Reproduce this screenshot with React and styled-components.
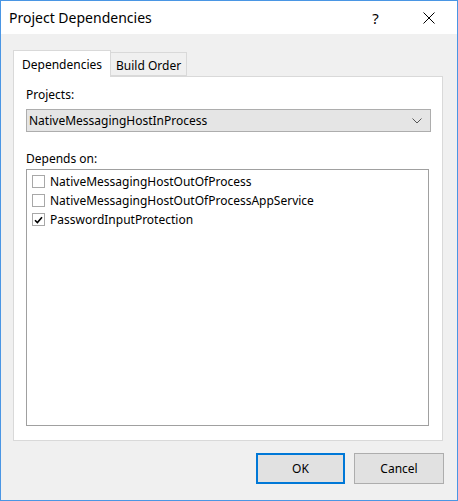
import React, { useState } from 'react'
import styled, { createGlobalStyle } from 'styled-components'

const GlobalStyle = createGlobalStyle`
  html, body {
    margin: 0;
    padding: 0;
    background: #ffffff;
  }
  body {
    font-family: "Noto Sans", "Open Sans", sans-serif;
    font-size: 12px;
    color: #000;
  }
`

const Window = styled.div`
  width: 458px;
  height: 501px;
  box-sizing: border-box;
  border: 1px solid #4a96e4;
  background: #f0f0f0;
  display: flex;
  flex-direction: column;
`

const TitleBar = styled.div`
  height: 33px;
  background: #fff;
  display: flex;
  align-items: center;
  padding: 0 2px 0 8px;
  font-size: 14px;
`

const Title = styled.div`
  flex: 1;
`

const TitleButton = styled.div`
  width: ${p => p.w}px;
  height: 33px;
  display: flex;
  align-items: center;
  justify-content: center;
  font-size: 15px;
  color: #000;
`

const Body = styled.div`
  flex: 1;
  display: flex;
  flex-direction: column;
  padding: 16px 13px 0 12px;
`

const TabRow = styled.div`
  display: flex;
  align-items: flex-end;
  height: 26px;
`

const Tab = styled.div`
  box-sizing: border-box;
  border: 1px solid #d9d9d9;
  border-bottom: ${p => (p.active ? 'none' : '1px solid #d9d9d9')};
  background: ${p => (p.active ? '#fff' : '#f0f0f0')};
  height: ${p => (p.active ? 27 : 24)}px;
  margin-bottom: ${p => (p.active ? -1 : 0)}px;
  margin-left: ${p => (p.active ? 0 : -1)}px;
  padding: 0 ${p => (p.active ? 8 : 5)}px;
  display: flex;
  align-items: center;
  position: relative;
  z-index: ${p => (p.active ? 1 : 0)};
  padding-top: ${p => (p.active ? 0 : 2)}px;
`

const Panel = styled.div`
  box-sizing: border-box;
  height: 365px;
  margin-right: 1px;
  border: 1px solid #d9d9d9;
  background: #fff;
  padding: 9px 11px 0 12px;
  display: flex;
  flex-direction: column;
`

const Label = styled.div`
  line-height: 18px;
`

const Combo = styled.div`
  box-sizing: border-box;
  height: 23px;
  margin-top: 5px;
  border: 1px solid #adadad;
  background: #e5e5e5;
  display: flex;
  align-items: center;
  padding: 0 8px 0 2px;
  margin-bottom: 18px;
`

const ComboText = styled.div`
  flex: 1;
`

const ListBox = styled.div`
  box-sizing: border-box;
  height: 257px;
  margin-top: 1px;
  margin-right: 2px;
  border: 1px solid #a0a0a0;
  background: #fff;
  padding: 2px 0 0 5px;
`

const Row = styled.label`
  display: flex;
  align-items: center;
  height: 19px;
  gap: 5px;
`

const Box = styled.span`
  box-sizing: border-box;
  width: 13px;
  height: 13px;
  border: 1px solid #a8a8a8;
  background: #fff;
  display: flex;
  align-items: center;
  justify-content: center;
`

const ButtonRow = styled.div`
  display: flex;
  justify-content: flex-end;
  gap: 9px;
  margin-top: 12px;
`

const Button = styled.button`
  box-sizing: border-box;
  width: ${p => p.w}px;
  height: 31px;
  font-family: inherit;
  font-size: 12px;
  background: #e1e1e1;
  border: ${p => (p.primary ? '2px solid #0078d7' : '1px solid #adadad')};
  padding: 0;
  color: #000;
`

const items = [
  { name: 'NativeMessagingHostOutOfProcess', checked: false },
  { name: 'NativeMessagingHostOutOfProcessAppService', checked: false },
  { name: 'PasswordInputProtection', checked: true },
]

function CheckRow({ name, checked, onToggle }) {
  return (
    <Row onClick={onToggle}>
      <Box>
        {checked && (
          <svg width="9" height="8" viewBox="0 0 9 8">
            <path d="M1 4.2 L3.4 6.6 L8 1.2" fill="none" stroke="#000" strokeWidth="1.6" />
          </svg>
        )}
      </Box>
      <span>{name}</span>
    </Row>
  )
}

export default function App() {
  const [list, setList] = useState(items)
  const toggle = i =>
    setList(list.map((it, j) => (j === i ? { ...it, checked: !it.checked } : it)))

  return (
    <>
      <GlobalStyle />
      <Window>
        <TitleBar>
          <Title>Project Dependencies</Title>
          <TitleButton w={53}>?</TitleButton>
          <TitleButton w={53}>
            <svg width="12" height="12" viewBox="0 0 12 12">
              <path d="M0.5 0.5 L11.5 11.5 M11.5 0.5 L0.5 11.5" stroke="#000" strokeWidth="1" />
            </svg>
          </TitleButton>
        </TitleBar>
        <Body>
          <TabRow>
            <Tab active>Dependencies</Tab>
            <Tab>Build Order</Tab>
          </TabRow>
          <Panel>
            <Label>Projects:</Label>
            <Combo>
              <ComboText>NativeMessagingHostInProcess</ComboText>
              <svg width="10" height="6" viewBox="0 0 10 6">
                <path d="M0.5 0.5 L5 5 L9.5 0.5" fill="none" stroke="#555" strokeWidth="1" />
              </svg>
            </Combo>
            <Label>Depends on:</Label>
            <ListBox>
              {list.map((it, i) => (
                <CheckRow key={it.name} {...it} onToggle={() => toggle(i)} />
              ))}
            </ListBox>
          </Panel>
          <ButtonRow>
            <Button primary w={89}>OK</Button>
            <Button w={90}>Cancel</Button>
          </ButtonRow>
        </Body>
      </Window>
    </>
  )
}
